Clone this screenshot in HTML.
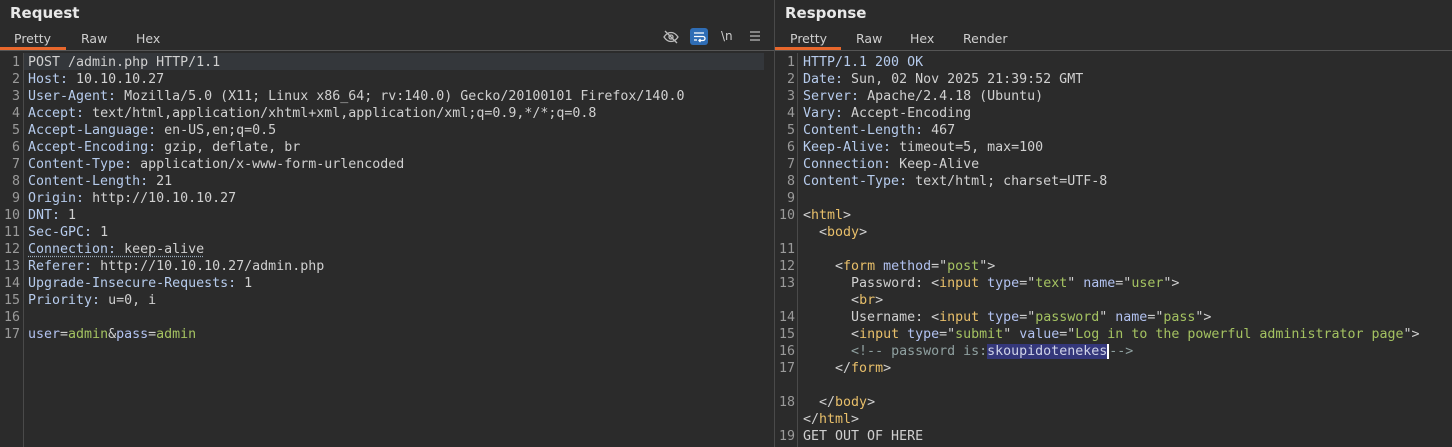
<!DOCTYPE html>
<html><head><meta charset="utf-8"><style>
*{margin:0;padding:0;box-sizing:border-box}
body{width:1452px;height:447px;background:#2b2b2b;overflow:hidden;font-family:"DejaVu Sans","Liberation Sans",sans-serif;color:#d6d6d6;position:relative}
.pane{position:absolute;top:0;height:447px}
.title{position:absolute;top:4px;left:10px;font-size:15px;font-weight:bold;color:#e8e8e8}
.tabs{position:absolute;top:29px;left:0;height:21px;font-size:12.5px;color:#cfcfcf}
.tab{position:absolute;top:2px}
.sel{position:absolute;top:18px;height:3px;background:#e8672c}
.sep{position:absolute;top:50px;left:0;right:0;height:1px;background:#555}
.code{position:absolute;top:54px;left:0;right:0;font-family:"DejaVu Sans Mono","Liberation Mono",monospace;font-size:13.3px;line-height:17px;white-space:pre}
.ln{position:absolute;left:0;width:20px;text-align:right;color:#9a9a9a}
.tx{position:absolute}
.gut{position:absolute;top:53px;bottom:0;width:1px;background:#4a4a4a}
.k{color:#b6cbec}.v{color:#d0d0d0}.g{color:#a4c261}.t{color:#e8bf6a}.a{color:#b2c2f0}.c{color:#8fa0a0}
</style></head><body>
<div class="pane" style="left:0;width:774px">
<div class="title">Request</div>
<div class="tabs" style="width:774px">
<span class="tab" style="left:14px">Pretty</span><span class="tab" style="left:81px">Raw</span><span class="tab" style="left:136px">Hex</span>
<div class="sel" style="left:0;width:66px"></div>
<svg style="position:absolute;left:663px;top:0" width="16" height="16" viewBox="0 0 16 16" fill="none" stroke="#bbb" stroke-width="1.3"><path d="M1 8c2-3 4.5-4.5 7-4.5S13 5 15 8c-2 3-4.5 4.5-7 4.5S3 11 1 8z"/><circle cx="8" cy="8" r="2"/><path d="M2 2l12 12"/></svg>
<div style="position:absolute;left:690px;top:-1px;width:18px;height:17px;background:#2f6db5;border-radius:3px"><svg width="18" height="17" viewBox="0 0 18 17" fill="none" stroke="#fff" stroke-width="1.3"><path d="M4 5h10M4 8.5h9a2 2 0 010 4H9M10.5 11l-1.5 1.5 1.5 1.5M4 12h3"/></svg></div>
<span style="position:absolute;left:721px;top:0;font-size:12px;color:#ccc">\n</span>
<svg style="position:absolute;left:749px;top:1px" width="12" height="12" viewBox="0 0 12 12" stroke="#bbb" stroke-width="1.3"><path d="M1 2h10M1 6h10M1 10h10"/></svg>
</div>
<div class="sep"></div>
<div style="position:absolute;top:53px;left:24px;width:740px;height:17px;background:#34373b"></div>
<div class="gut" style="left:23px"></div>
<div class="code">
<div class="ln" style="top:0">1</div><div class="tx" style="left:28px;top:0"><span class="v">POST /admin.php HTTP/1.1</span></div>
<div class="ln" style="top:17px">2</div><div class="tx" style="left:28px;top:17px"><span class="k">Host:</span> <span class="v">10.10.10.27</span></div>
<div class="ln" style="top:34px">3</div><div class="tx" style="left:28px;top:34px"><span class="k">User-Agent:</span> <span class="v">Mozilla/5.0 (X11; Linux x86_64; rv:140.0) Gecko/20100101 Firefox/140.0</span></div>
<div class="ln" style="top:51px">4</div><div class="tx" style="left:28px;top:51px"><span class="k">Accept:</span> <span class="v">text/html,application/xhtml+xml,application/xml;q=0.9,*/*;q=0.8</span></div>
<div class="ln" style="top:68px">5</div><div class="tx" style="left:28px;top:68px"><span class="k">Accept-Language:</span> <span class="v">en-US,en;q=0.5</span></div>
<div class="ln" style="top:85px">6</div><div class="tx" style="left:28px;top:85px"><span class="k">Accept-Encoding:</span> <span class="v">gzip, deflate, br</span></div>
<div class="ln" style="top:102px">7</div><div class="tx" style="left:28px;top:102px"><span class="k">Content-Type:</span> <span class="v">application/x-www-form-urlencoded</span></div>
<div class="ln" style="top:119px">8</div><div class="tx" style="left:28px;top:119px"><span class="k">Content-Length:</span> <span class="v">21</span></div>
<div class="ln" style="top:136px">9</div><div class="tx" style="left:28px;top:136px"><span class="k">Origin:</span> <span class="v">http://10.10.10.27</span></div>
<div class="ln" style="top:153px">10</div><div class="tx" style="left:28px;top:153px"><span class="k">DNT:</span> <span class="v">1</span></div>
<div class="ln" style="top:170px">11</div><div class="tx" style="left:28px;top:170px"><span class="k">Sec-GPC:</span> <span class="v">1</span></div>
<div class="ln" style="top:187px">12</div><div class="tx" style="left:28px;top:187px;text-decoration:underline dotted #9ab;text-underline-offset:3px"><span class="k">Connection:</span> <span class="v">keep-alive</span></div>
<div class="ln" style="top:204px">13</div><div class="tx" style="left:28px;top:204px"><span class="k">Referer:</span> <span class="v">http://10.10.10.27/admin.php</span></div>
<div class="ln" style="top:221px">14</div><div class="tx" style="left:28px;top:221px"><span class="k">Upgrade-Insecure-Requests:</span> <span class="v">1</span></div>
<div class="ln" style="top:238px">15</div><div class="tx" style="left:28px;top:238px"><span class="k">Priority:</span> <span class="v">u=0, i</span></div>
<div class="ln" style="top:255px">16</div>
<div class="ln" style="top:272px">17</div><div class="tx" style="left:28px;top:272px"><span class="a">user</span><span class="v">=</span><span class="g">admin</span><span class="v">&amp;</span><span class="a">pass</span><span class="v">=</span><span class="g">admin</span></div>
</div>
</div>
<div style="position:absolute;left:774px;top:0;width:1px;height:447px;background:#4a4a4a"></div>
<div class="pane" style="left:775px;width:677px">
<div class="title" style="left:10px">Response</div>
<div class="tabs" style="width:677px">
<span class="tab" style="left:15px">Pretty</span><span class="tab" style="left:81px">Raw</span><span class="tab" style="left:135px">Hex</span><span class="tab" style="left:188px">Render</span>
<div class="sel" style="left:0;width:66px"></div>
</div>
<div class="sep"></div>
<div class="gut" style="left:22px"></div>
<div class="code">
<div class="ln" style="top:0">1</div><div class="tx" style="left:28px;top:0"><span class="k">HTTP/1.1 200 OK</span></div>
<div class="ln" style="top:17px">2</div><div class="tx" style="left:28px;top:17px"><span class="k">Date:</span> <span class="v">Sun, 02 Nov 2025 21:39:52 GMT</span></div>
<div class="ln" style="top:34px">3</div><div class="tx" style="left:28px;top:34px"><span class="k">Server:</span> <span class="v">Apache/2.4.18 (Ubuntu)</span></div>
<div class="ln" style="top:51px">4</div><div class="tx" style="left:28px;top:51px"><span class="k">Vary:</span> <span class="v">Accept-Encoding</span></div>
<div class="ln" style="top:68px">5</div><div class="tx" style="left:28px;top:68px"><span class="k">Content-Length:</span> <span class="v">467</span></div>
<div class="ln" style="top:85px">6</div><div class="tx" style="left:28px;top:85px"><span class="k">Keep-Alive:</span> <span class="v">timeout=5, max=100</span></div>
<div class="ln" style="top:102px">7</div><div class="tx" style="left:28px;top:102px"><span class="k">Connection:</span> <span class="v">Keep-Alive</span></div>
<div class="ln" style="top:119px">8</div><div class="tx" style="left:28px;top:119px"><span class="k">Content-Type:</span> <span class="v">text/html; charset=UTF-8</span></div>
<div class="ln" style="top:136px">9</div>
<div class="ln" style="top:153px">10</div><div class="tx" style="left:28px;top:153px"><span class="v">&lt;</span><span class="t">html</span><span class="v">&gt;</span></div>
<div class="tx" style="left:28px;top:170px">  <span class="v">&lt;</span><span class="t">body</span><span class="v">&gt;</span></div>
<div class="ln" style="top:187px">11</div>
<div class="ln" style="top:204px">12</div><div class="tx" style="left:28px;top:204px">    <span class="v">&lt;</span><span class="t">form</span> <span class="a">method</span><span class="v">="</span><span class="g">post</span><span class="v">"&gt;</span></div>
<div class="ln" style="top:221px">13</div><div class="tx" style="left:28px;top:221px">      <span class="v">Password: &lt;</span><span class="t">input</span> <span class="a">type</span><span class="v">="</span><span class="g">text</span><span class="v">"</span> <span class="a">name</span><span class="v">="</span><span class="g">user</span><span class="v">"&gt;</span></div>
<div class="tx" style="left:28px;top:238px">      <span class="v">&lt;</span><span class="t">br</span><span class="v">&gt;</span></div>
<div class="ln" style="top:255px">14</div><div class="tx" style="left:28px;top:255px">      <span class="v">Username: &lt;</span><span class="t">input</span> <span class="a">type</span><span class="v">="</span><span class="g">password</span><span class="v">"</span> <span class="a">name</span><span class="v">="</span><span class="g">pass</span><span class="v">"&gt;</span></div>
<div class="ln" style="top:272px">15</div><div class="tx" style="left:28px;top:272px">      <span class="v">&lt;</span><span class="t">input</span> <span class="a">type</span><span class="v">="</span><span class="g">submit</span><span class="v">"</span> <span class="a">value</span><span class="v">="</span><span class="g">Log in to the powerful administrator page</span><span class="v">"&gt;</span></div>
<div class="ln" style="top:289px">16</div><div class="tx" style="left:28px;top:289px">      <span class="c">&lt;!-- password is:</span><span class="c" style="background:#34377a;color:#cfd3e8">skoupidotenekes</span><span style="border-left:2px solid #fff"></span><span class="c">--&gt;</span></div>
<div class="ln" style="top:306px">17</div><div class="tx" style="left:28px;top:306px">    <span class="v">&lt;/</span><span class="t">form</span><span class="v">&gt;</span></div>
<div class="ln" style="top:340px">18</div><div class="tx" style="left:28px;top:340px">  <span class="v">&lt;/</span><span class="t">body</span><span class="v">&gt;</span></div>
<div class="tx" style="left:28px;top:357px"><span class="v">&lt;/</span><span class="t">html</span><span class="v">&gt;</span></div>
<div class="ln" style="top:374px">19</div><div class="tx" style="left:28px;top:374px"><span class="v">GET OUT OF HERE</span></div>
</div>
</div>
</body></html>
